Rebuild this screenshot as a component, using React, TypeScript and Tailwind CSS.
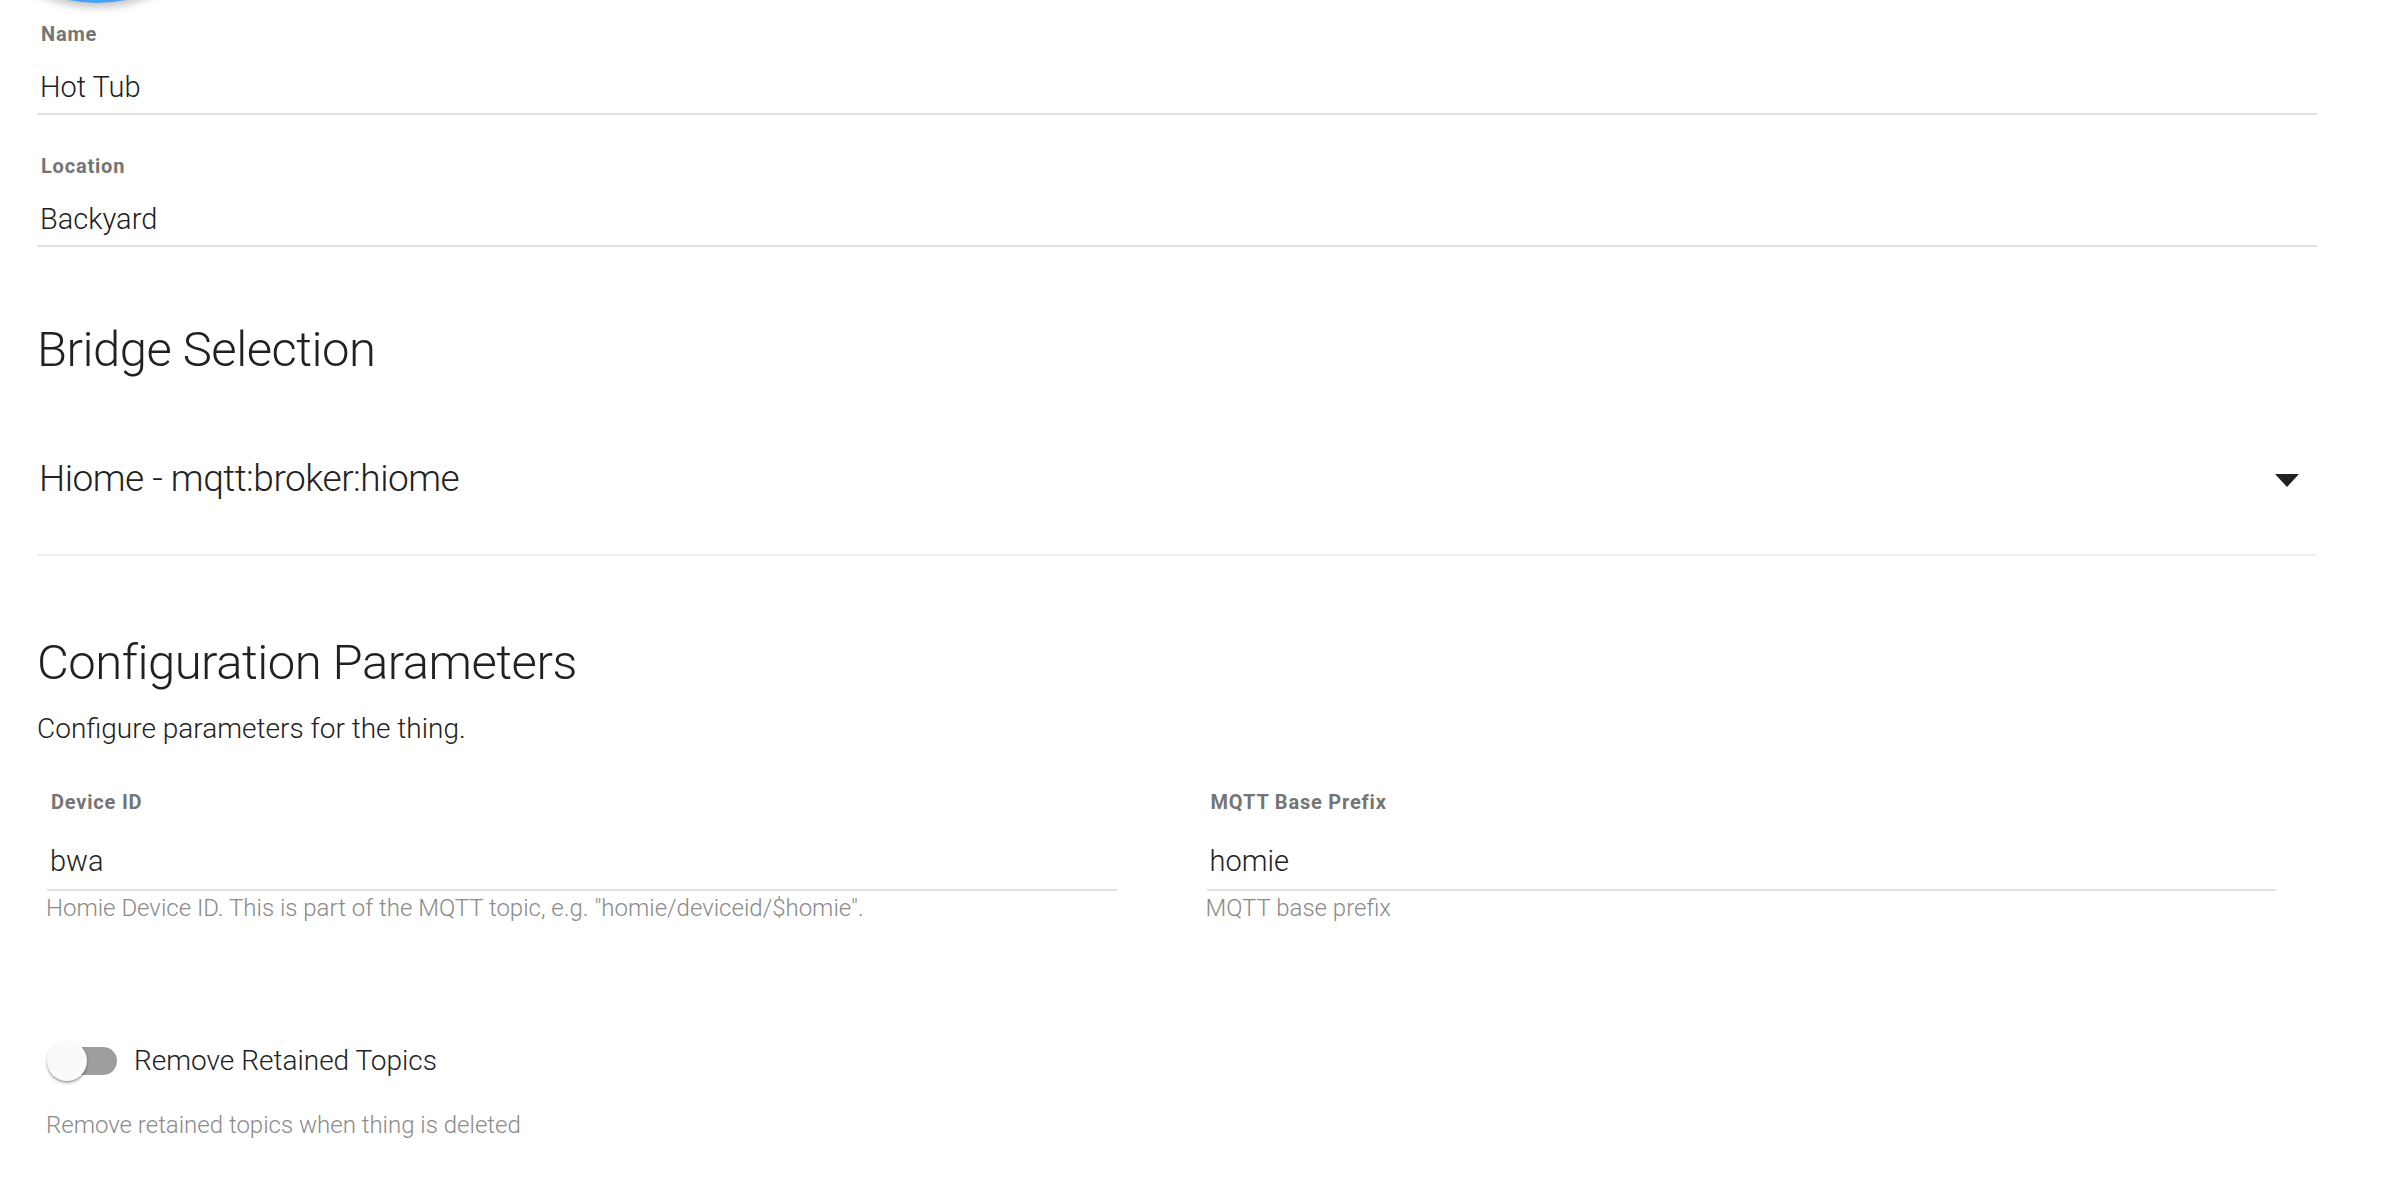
import React from 'react';

const labelCls = 'h-5 text-[20px] leading-5 font-bold tracking-[0.8px] text-[#757575]';
const valueCls = 'h-9 text-[29px] leading-9 font-light text-[#212121]';
const helperCls = 'h-7 text-[24px] leading-7 font-light text-[#8a8a8a]';
const headingCls = 'h-14 text-[49px] leading-14 font-light tracking-[-0.5px] text-[#212121]';

function TextField({ label, value, className }: { label: string; value: string; className?: string }) {
  return (
    <div className={className}>
      <div className={`${labelCls} pl-[4px]`}>{label}</div>
      <div className="mt-[25px] border-b-2 border-[#e0e0e0] pb-2">
        <div className={`${valueCls} px-[3px]`}>{value}</div>
      </div>
    </div>
  );
}

function ParamField({ label, value, hint }: { label: string; value: string; hint: string }) {
  return (
    <div>
      <div className={`${labelCls} pl-[4px]`}>{label}</div>
      <div className="mt-[31px] border-b-2 border-[#e0e0e0] pb-[10px]">
        <div className={`${valueCls} pl-[3px]`}>{value}</div>
      </div>
      <div className={`${helperCls} mt-[3px] -ml-px`}>{hint}</div>
    </div>
  );
}

function Toggle() {
  return (
    <div className="relative h-10 w-[70px] shrink-0">
      <div className="absolute left-[3px] top-[6px] h-7 w-[67px] rounded-full bg-[#9e9e9e]" />
      <div className="absolute left-0 top-0 h-10 w-10 rounded-full bg-[#fafafa] shadow-[0_2px_3px_rgba(0,0,0,0.3),0_1px_1px_rgba(0,0,0,0.14)]" />
    </div>
  );
}

export default function App() {
  return (
    <div className="relative min-h-[1196px] overflow-hidden bg-white font-['Roboto',sans-serif] text-[#212121]">
      {/* header avatar, scrolled mostly out of view */}
      <div className="absolute left-[-43px] top-[-277px] h-[280px] w-[280px] rounded-full bg-[#45a2f5] shadow-[0_4px_8px_rgba(0,0,0,0.25)]" />

      <div className="ml-[37px] w-[2280px] pt-6">
        <TextField label="Name" value="Hot Tub" />
        <TextField label="Location" value="Backyard" className="mt-[41px]" />

        <h2 className={`mt-[75px] ${headingCls}`}>Bridge Selection</h2>

        <div className="mt-[79px] border-b-2 border-[#eeeeee] pb-[53px]">
          <div className="flex h-11 items-center justify-between pl-[2px] pr-[18px]">
            <span className="text-[37px] leading-11 font-light tracking-[-0.5px] text-[#212121]">
              Hiome - mqtt:broker:hiome
            </span>
            <svg width="24" height="13" viewBox="0 0 24 13" className="mt-[2px]">
              <polygon points="0,0 24,0 12,13" fill="#212121" />
            </svg>
          </div>
        </div>

        <h2 className={`mt-[79px] ${headingCls}`}>Configuration Parameters</h2>
        <p className="mt-[21px] h-[34px] text-[28px] leading-[34px] font-light text-[#212121]">
          Configure parameters for the thing.
        </p>

        <div className="mt-[46px] ml-[10px] mr-[41px] grid grid-cols-2 gap-x-[90px]">
          <ParamField
            label="Device ID"
            value="bwa"
            hint={'Homie Device ID. This is part of the MQTT topic, e.g. "homie/deviceid/$homie".'}
          />
          <ParamField label="MQTT Base Prefix" value="homie" hint="MQTT base prefix" />
        </div>

        <div className="mt-[119px] ml-[10px] flex h-10 items-center">
          <Toggle />
          <span className="ml-[17px] text-[28px] leading-[34px] font-light text-[#212121]">Remove Retained Topics</span>
        </div>
        <div className={`${helperCls} mt-[30px] ml-[9px]`}>Remove retained topics when thing is deleted</div>
      </div>
    </div>
  );
}
